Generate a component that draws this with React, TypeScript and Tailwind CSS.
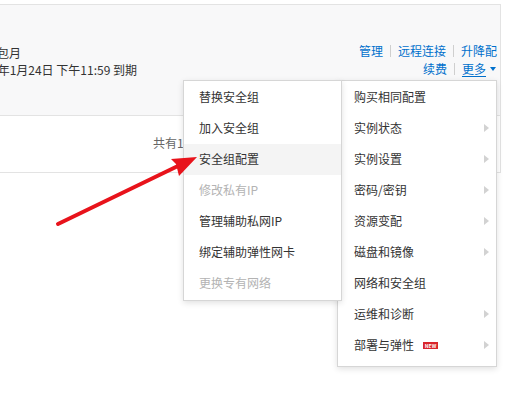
const leftItems = [
  { label: "替换安全组" },
  { label: "加入安全组" },
  { label: "安全组配置", active: true },
  { label: "修改私有IP", disabled: true },
  { label: "管理辅助私网IP" },
  { label: "绑定辅助弹性网卡" },
  { label: "更换专有网络", disabled: true },
];

const rightItems = [
  { label: "购买相同配置" },
  { label: "实例状态", sub: true },
  { label: "实例设置", sub: true },
  { label: "密码/密钥", sub: true },
  { label: "资源变配", sub: true },
  { label: "磁盘和镜像", sub: true },
  { label: "网络和安全组" },
  { label: "运维和诊断", sub: true },
  { label: "部署与弹性", sub: true, badge: true },
];

function Sep() {
  return <span className="inline-block w-px h-[12px] bg-[#cfcfcf] mx-[7px]" />;
}

export default function App() {
  return (
    <div
      className="relative w-[518px] h-[395px] overflow-hidden bg-white text-[12px] text-[#333]"
      style={{ fontFamily: '"Noto Sans CJK SC", "Noto Sans", sans-serif' }}
    >
      <div className="pt-[4px]">
        <div className="w-[501px] border-t border-r border-[#e3e3e3]">
          {/* instance summary row */}
          <div className="h-[111px] bg-[#f8f8f9] border-b border-[#e3e3e3] flex justify-between">
            <div className="pt-[39px] leading-[17px] overflow-hidden whitespace-nowrap">
              <div className="ml-[-27px]">包年包月</div>
              <div className="ml-[-29px]">2025年1月24日 下午11:59 到期</div>
            </div>
            <div className="pt-[37px] pr-[3px] leading-[18px] text-[#0070cc] flex flex-col items-end">
              <div className="flex items-center">
                <span>管理</span>
                <Sep />
                <span>远程连接</span>
                <Sep />
                <span>升降配</span>
              </div>
              <div className="flex items-center pr-[1px]">
                <span>续费</span>
                <Sep />
                <span className="underline underline-offset-2">更多</span>
                <span className="ml-[4px] w-0 h-0 border-x-[3.5px] border-x-transparent border-t-[4px] border-t-[#0070cc]" />
              </div>
            </div>
          </div>
          {/* pagination row */}
          <div className="h-[57px] border-b border-[#e3e3e3] pl-[153px] pt-[18px] text-[#666] leading-[18px]">
            共有1条
          </div>
        </div>
      </div>

      {/* sub menu */}
      <div className="absolute left-[183px] top-[80px] w-[159px] z-20 bg-white border border-[#d6d6d6] shadow-[0_2px_6px_rgba(0,0,0,0.12)] py-[1px]">
        {leftItems.map((it) => (
          <div
            key={it.label}
            className={`h-[31px] flex items-center pl-[15px] pb-[1px] ${it.active ? "bg-[#f4f4f4]" : ""} ${
              it.disabled ? "text-[#b3b3b3]" : "text-[#333]"
            }`}
          >
            {it.label}
          </div>
        ))}
      </div>

      {/* more menu */}
      <div className="absolute left-[337px] top-[80px] w-[160px] z-10 bg-white border border-[#d6d6d6] shadow-[0_2px_6px_rgba(0,0,0,0.12)] pt-[1px] pb-[5px]">
        {rightItems.map((it) => (
          <div key={it.label} className="h-[31px] flex items-center justify-between pl-[16px] pr-[7px] pb-[1px]">
            <span className="flex items-center">
              {it.label}
              {it.badge && (
                <span className="ml-[9px] bg-[#d9262c] text-white text-[5px] leading-[7px] font-bold px-[2px] h-[7px] w-[15px] flex items-center justify-center">
                  NEW
                </span>
              )}
            </span>
            {it.sub && (
              <span className="w-0 h-0 border-y-[4.5px] border-y-transparent border-l-[5px] border-l-[#d2d2d2]" />
            )}
          </div>
        ))}
      </div>

      {/* annotation arrow */}
      <svg className="absolute left-0 top-0 z-30 pointer-events-none" width="518" height="395">
        <line x1="58" y1="224" x2="180" y2="165" stroke="#e8131b" strokeWidth="4" strokeLinecap="round" />
        <polygon points="197,157 171,159 176,164 179,176" fill="#e8131b" />
      </svg>
    </div>
  );
}
